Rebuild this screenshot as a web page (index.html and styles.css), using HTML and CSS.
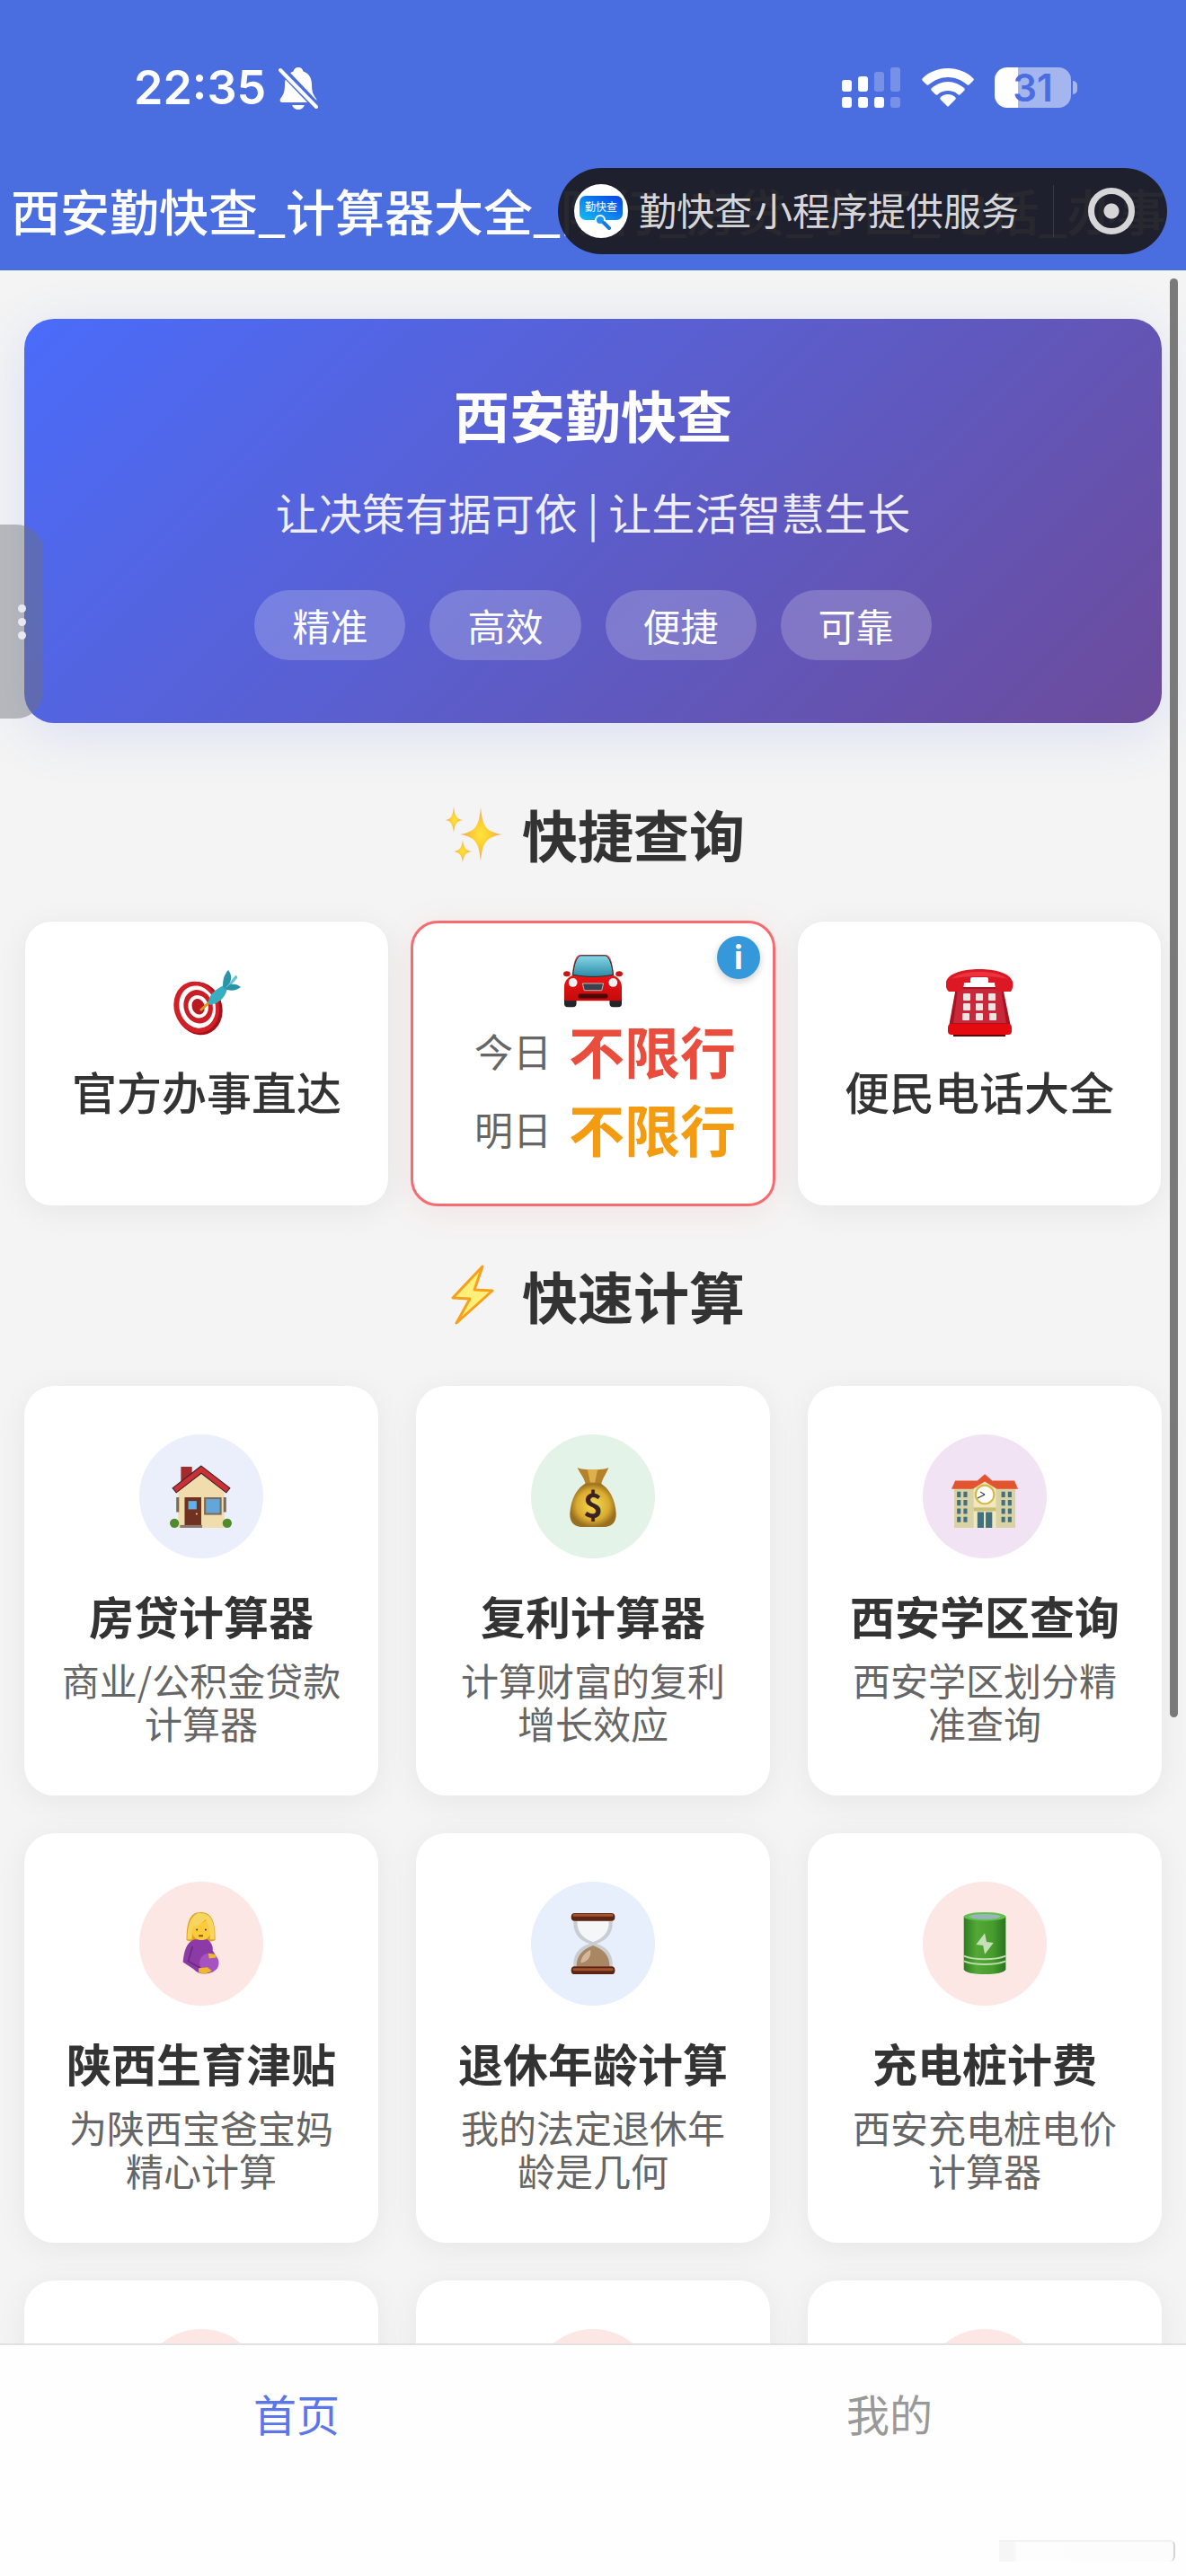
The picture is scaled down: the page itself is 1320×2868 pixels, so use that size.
FILE: index.html
```html
<!DOCTYPE html>
<html lang="zh-CN">
<head>
    <meta charset="UTF-8">
    <meta name="viewport" content="width=device-width, initial-scale=1.0">
    <title>西安勤快查</title>
    <link rel="stylesheet" href="styles.css">
</head>
<body>
    <header class="header">
        <div class="status-bar">
            <div class="status-left">
                <span class="time">22:35</span>
                <svg class="bell" viewBox="0 0 44 48">
                    <path fill="#fff" d="M22 1c3 0 5 2 5.500 4.500C34 8 37 13 37 20c0 9 2 12 5 16 1 2 0 4-2 4H4c-2 0-3-2-2-4 3-4 5-7 5-16 0-7 3-12 9.500-14.500C17 3 19 1 22 1z"/>
                    <path fill="#fff" d="M15 43h14c-1 3-4 5-7 5s-6-2-7-5z"/>
                    <path stroke="#4a6ddf" stroke-width="9" d="M2 2l41 43"/>
                    <path stroke="#fff" stroke-width="4" stroke-linecap="round" d="M2 4l40 41"/>
                </svg>
            </div>
            <div class="status-right">
                <svg class="signal" viewBox="0 0 66 46" fill="#fff">
                    <rect x="0" y="14" width="11" height="13" rx="3"/>
                    <rect x="18" y="10" width="11" height="17" rx="3"/>
                    <rect x="36" y="5" width="11" height="22" rx="3" opacity=".25"/>
                    <rect x="54" y="0" width="11" height="27" rx="3" opacity=".25"/>
                    <rect x="0" y="33" width="11" height="12" rx="3"/>
                    <rect x="18" y="33" width="11" height="12" rx="3"/>
                    <rect x="36" y="33" width="11" height="12" rx="3"/>
                    <rect x="54" y="33" width="11" height="12" rx="3" opacity=".25"/>
                </svg>
                <svg class="wifi" viewBox="0 0 58 43" fill="#fff">
                    <path d="M29 0C18 0 8 4 1 11c-1 1-1 2 0 3l4 4c1 1 2 1 3 0C14 13 21 10 29 10s15 3 21 8c1 1 2 1 3 0l4-4c1-1 1-2 0-3C50 4 40 0 29 0z"/>
                    <path d="M29 15c-7 0-13 3-18 7-1 1-1 2 0 3l4 4c1 1 2 1 3 0 3-3 7-4 11-4s8 1 11 4c1 1 2 1 3 0l4-4c1-1 1-2 0-3-5-4-11-7-18-7z"/>
                    <path d="M29 29c-3 0-6 1-8 3-1 1-1 2 0 3l7 7c1 1 1 1 2 0l7-7c1-1 1-2 0-3-2-2-5-3-8-3z"/>
                </svg>
                <div class="battery">
                    <span class="battery-level">31</span>
                    <span class="battery-cap"></span>
                </div>
            </div>
        </div>
        <div class="nav-bar">
            <h1 class="nav-title">西安勤快查_计算器大全_限行_房贷_学区_电话_办事</h1>
            <div class="capsule">
                <svg class="capsule-logo" viewBox="0 0 60 60">
                    <defs>
                        <linearGradient id="logo" x1="0" x2="1" y1="1" y2="0">
                            <stop offset="0" stop-color="#12c0f2"/>
                            <stop offset="1" stop-color="#0a3fe8"/>
                        </linearGradient>
                    </defs>
                    <circle cx="30" cy="30" r="30" fill="#fff"/>
                    <rect x="6" y="13" width="48" height="27" rx="7" fill="url(#logo)"/>
                    <text x="30" y="30" font-size="12" fill="#fff" text-anchor="middle">勤快查</text>
                    <circle cx="29" cy="40" r="5" fill="#1597f3" stroke="#fff" stroke-width="2"/>
                    <path d="M33 43l6 6" stroke="#1a78d8" stroke-width="4" stroke-linecap="round"/>
                </svg>
                <span class="capsule-text"><span>勤快查</span><span>小程序提供服务</span></span>
                <span class="capsule-line"></span>
                <button class="capsule-close" aria-label="关闭"></button>
            </div>
        </div>
    </header>

    <main class="content">
        <section class="hero">
            <h2 class="hero-title">西安勤快查</h2>
            <p class="hero-subtitle">让决策有据可依 | 让生活智慧生长</p>
            <div class="hero-tags">
                <span class="tag">精准</span>
                <span class="tag">高效</span>
                <span class="tag">便捷</span>
                <span class="tag">可靠</span>
            </div>
        </section>

        <h2 class="section-title">
            <svg viewBox="0 0 68 68">
                <defs>
                    <radialGradient id="spark">
                        <stop offset="0" stop-color="#ffe23e"/>
                        <stop offset=".4" stop-color="#fdd032"/>
                        <stop offset="1" stop-color="#eda25a"/>
                    </radialGradient>
                </defs>
                <path fill="url(#spark)" d="M44 5c2 20 5 27 24 30-19 3-22 10-24 30-2-20-5-27-23-30 18-3 21-10 23-30z"/>
                <path fill="url(#spark)" d="M14 4c1 10 3 14 10 15-7 1-9 5-10 14-1-9-3-13-9-14 6-1 8-5 9-15z"/>
                <path fill="url(#spark)" d="M24 41c1 8 3 12 10 13-7 1-9 5-10 12-1-7-3-11-10-12 7-1 9-5 10-13z"/>
            </svg>
            <span>快捷查询</span>
        </h2>

        <!-- Quick query cards -->
        <div class="quick-grid">
            <a class="quick-card" href="#">
                <svg class="quick-icon" viewBox="0 0 75 75">
                    <g transform="rotate(-18 27 43)">
                        <ellipse cx="28" cy="44" rx="26" ry="30" fill="#a3121a"/>
                        <ellipse cx="26" cy="42" rx="25" ry="29" fill="#d31f26"/>
                        <ellipse cx="27" cy="42" rx="20" ry="24" fill="#fff"/>
                        <ellipse cx="28" cy="42" rx="16" ry="19" fill="#c91e26"/>
                        <ellipse cx="28" cy="42" rx="11" ry="13" fill="#fff"/>
                        <ellipse cx="28" cy="42" rx="7" ry="9" fill="#b81820"/>
                    </g>
                    <path d="M30 46l12-11" stroke="#d79a1e" stroke-width="3"/>
                    <path fill="#37afc0" d="M39 38c0-8 5-14 17-20l4 4C57 33 50 38 41 40z"/>
                    <path fill="#2b93a6" d="M55 19c0-9 2-13 6-18 4 5 4 10 1 16l-5 5z"/>
                    <path fill="#5cc5d1" d="M58 21l11-14c2 0 2 1 2 3L62 20z"/>
                    <path fill="#2b93a6" d="M57 22l6-5c5-1 9 0 12 3-5 4-11 5-18 2z"/>
                </svg>
                <span class="quick-label">官方办事直达</span>
            </a>
            <div class="quick-card limit-card">
                <button class="info-btn" aria-label="说明">i</button>
                <svg class="car-icon" viewBox="0 0 68 68">
                    <defs>
                        <linearGradient id="glass" x2="0" y2="1">
                            <stop offset="0" stop-color="#87d8e8"/>
                            <stop offset="1" stop-color="#2b8ba5"/>
                        </linearGradient>
                        <linearGradient id="red" x2="0" y2="1">
                            <stop offset="0" stop-color="#f0524a"/>
                            <stop offset=".5" stop-color="#e61414"/>
                            <stop offset="1" stop-color="#c60a0a"/>
                        </linearGradient>
                    </defs>
                    <rect x="1" y="48" width="14" height="15" rx="4" fill="#22262b"/>
                    <rect x="53" y="48" width="14" height="15" rx="4" fill="#22262b"/>
                    <ellipse cx="4" cy="25" rx="4" ry="3" fill="#c91616"/>
                    <ellipse cx="64" cy="25" rx="4" ry="3" fill="#c91616"/>
                    <path fill="url(#red)" d="M10 27C12 10 14 3 20 3h28c6 0 8 7 10 24 5 2 9 7 9 13v13c0 2-1 3-3 3H4c-2 0-3-1-3-3V40c0-6 4-11 9-13z"/>
                    <path fill="url(#glass)" stroke="#282828" d="M11 26c1-11 4-21 9-22h28c5 1 8 11 9 22-15 3-31 3-46 0z"/>
                    <circle cx="11" cy="35" r="5" fill="#eaf2f4"/>
                    <circle cx="57" cy="35" r="5" fill="#eaf2f4"/>
                    <path fill="#3b424b" stroke="#b9c0c4" d="M22 36h24l-2 8H24z"/>
                    <rect x="17" y="48" width="34" height="5" rx="2" fill="#4a0808"/>
                </svg>
                <p class="limit-row"><span class="limit-day">今日</span><strong class="limit-today">不限行</strong></p>
                <p class="limit-row"><span class="limit-day">明日</span><strong class="limit-tomorrow">不限行</strong></p>
            </div>
            <a class="quick-card" href="#">
                <svg class="quick-icon" viewBox="0 0 75 75">
                    <path fill="#a8131f" d="M11 20h52l9 44H3z"/>
                    <path fill="#c8283a" d="M13 22h48l6 38H8z"/>
                    <path fill="#db1823" d="M0 14C3 4 20 0 37 0s34 4 37 14c1 4 0 8-2 11H58c-3-3-4-7-4-10H20c0 3-1 7-4 10H3c-3-3-4-7-3-11z"/>
                    <path fill="#ea3540" d="M5 11C15 4 26 3 37 3s22 1 32 8C55 7 19 7 5 11z"/>
                    <rect x="27" y="9" width="20" height="7" rx="2" fill="#fff"/>
                    <rect x="2" y="61" width="71" height="12" rx="4" fill="#e30b10"/>
                    <rect x="8" y="73" width="58" height="2" fill="#5d0709"/>
                    <g fill="#eee4e2">
                        <rect x="19" y="27" width="8" height="8" rx="1"/><rect x="33" y="27" width="8" height="8" rx="1"/><rect x="47" y="27" width="8" height="8" rx="1"/>
                        <rect x="19" y="38" width="8" height="8" rx="1"/><rect x="33" y="38" width="8" height="8" rx="1"/><rect x="47" y="38" width="8" height="8" rx="1"/>
                        <rect x="18" y="49" width="8" height="8" rx="1"/><rect x="33" y="49" width="8" height="8" rx="1"/><rect x="48" y="49" width="8" height="8" rx="1"/>
                    </g>
                </svg>
                <span class="quick-label">便民电话大全</span>
            </a>
        </div>

        <h2 class="section-title">
            <svg viewBox="0 0 68 68">
                <path fill="#fdf07a" stroke="#f9a01b" stroke-width="3" stroke-linejoin="round" d="M46 2L13 37l19 1L17 65l40-36-20-1z"/>
            </svg>
            <span>快速计算</span>
        </h2>

        <!-- Calculator cards -->
        <div class="calc-grid">
            <a class="calc-card" href="#">
                <span class="calc-icon blue">
                    <svg viewBox="0 0 68 68">
                        <path fill="#a52a2e" d="M12 2h12v20l-12 8z"/>
                        <path fill="#f1dcae" d="M34 6l25 22v40H9V28z"/>
                        <path fill="#ca3136" stroke="#3c2326" stroke-width="1" d="M34 1L3 25l4 5L34 9l27 21 4-5z"/>
                        <rect x="16" y="35" width="18" height="32" fill="#6e3122"/>
                        <rect x="20" y="39" width="9" height="9" fill="#62b0e4"/>
                        <circle cx="29" cy="53" r="1" fill="#fd5"/>
                        <rect x="38" y="36" width="17" height="17" fill="#62a6dc" stroke="#7b6a57" stroke-width="2"/>
                        <path fill="#7b6a57" d="M7 35h3v16H7zM58 35h3v16h-3z"/>
                        <circle cx="5" cy="63" r="5" fill="#4f8b2c"/>
                        <circle cx="62" cy="63" r="5" fill="#4f8b2c"/>
                        <rect x="11" y="65" width="24" height="3" fill="#8b7a6c"/>
                    </svg>
                </span>
                <span class="calc-title">房贷计算器</span>
                <span class="calc-desc">商业/公积金贷款计算器</span>
            </a>
            <a class="calc-card" href="#">
                <span class="calc-icon green">
                    <svg viewBox="0 0 68 68">
                        <defs>
                            <radialGradient id="bag">
                                <stop offset="0" stop-color="#f6dc52"/>
                                <stop offset=".7" stop-color="#d9ab30"/>
                                <stop offset="1" stop-color="#9a7020"/>
                            </radialGradient>
                        </defs>
                        <path fill="#b5812a" d="M17 3c6 3 28 3 34 0-3 7-7 12-8 18H26C25 15 20 9 17 3z"/>
                        <path fill="#ddb04b" d="M28 5l3 14h5l3-14z"/>
                        <path fill="url(#bag)" d="M26 20h16c9 5 16 16 17 33 0 9-4 13-11 14H20c-7-1-11-5-11-14 1-17 8-28 17-33z"/>
                        <text x="34" y="57" font-size="36" font-weight="700" fill="#3a2420" text-anchor="middle">$</text>
                    </svg>
                </span>
                <span class="calc-title">复利计算器</span>
                <span class="calc-desc">计算财富的复利增长效应</span>
            </a>
            <a class="calc-card" href="#">
                <span class="calc-icon purple">
                    <svg viewBox="0 0 72 68">
                        <path fill="#d9d2a4" d="M3 22h66v46H3z"/>
                        <path fill="#f0e9bf" d="M24 22l12-7 12 7v46H24z"/>
                        <path fill="#e2542f" d="M4 17h24l8-7 8 7h24l4 9H49l-13-8-13 8H0z"/>
                        <circle cx="36" cy="32" r="10" fill="#fff" stroke="#d8b644" stroke-width="2"/>
                        <path d="M36 32l-8 4M36 32l-5-3" stroke="#333" stroke-width="1"/>
                        <g fill="#42717d">
                            <path d="M6 29h4v6H6zM13 29h4v6h-4zM6 38h4v6H6zM13 38h4v6h-4zM6 47h4v6H6zM13 47h4v6h-4zM6 56h4v6H6zM13 56h4v6h-4z"/>
                            <path d="M54 29h4v6h-4zM61 29h4v6h-4zM54 38h4v6h-4zM61 38h4v6h-4zM54 47h4v6h-4zM61 47h4v6h-4zM54 56h4v6h-4zM61 56h4v6h-4z"/>
                            <path d="M28 51h7v17h-7zM37 51h7v17h-7z"/>
                        </g>
                        <path fill="#c9bd78" d="M24 46h24v4H24z"/>
                    </svg>
                </span>
                <span class="calc-title">西安学区查询</span>
                <span class="calc-desc">西安学区划分精准查询</span>
            </a>
            <a class="calc-card" href="#">
                <span class="calc-icon red">
                    <svg viewBox="0 0 68 72">
                        <path fill="#dfa31c" d="M33 0c13 0 17 10 17 32-5 3-28 3-33 0C17 13 20 0 33 0z"/>
                        <path fill="#8c3ba6" d="M26 31h15c4 3 7 8 6 13 7 9 7 17 1 24-8 4-18 3-23-3L13 57c1-12 4-23 13-26z"/>
                        <path fill="#fbcb3c" d="M23 15c8 0 14-3 19-8 6 13 3 25-8 25-8 0-12-7-11-17z"/>
                        <path fill="#f6d660" d="M30 1C21 5 18 16 18 31h5c1-5 0-10 1-14 6-1 12-5 15-9 3 5 5 10 5 23h5c1-18-3-30-16-30z"/>
                        <circle cx="29" cy="20" r="1" fill="#402018"/>
                        <circle cx="39" cy="20" r="1" fill="#402018"/>
                        <path d="M31 27h5" stroke="#9c4a1c" stroke-width="2"/>
                        <circle cx="43" cy="58" r="11" fill="#a553be"/>
                        <path d="M24 39l-5 17 14 8" stroke="#6f2b88" stroke-width="2" fill="none"/>
                        <path fill="#f0b62d" d="M31 64l10-1 5 4-8 4-7-2zM42 47l8 1 1 4-8 1z"/>
                    </svg>
                </span>
                <span class="calc-title">陕西生育津贴</span>
                <span class="calc-desc">为陕西宝爸宝妈精心计算</span>
            </a>
            <a class="calc-card" href="#">
                <span class="calc-icon sky">
                    <svg viewBox="0 0 68 72">
                        <path fill="#c9cdd1" d="M12 8h44c2 14-5 24-18 28 13 4 20 14 18 28H12c-2-14 5-24 18-28C17 32 10 22 12 8z"/>
                        <path fill="#f5f6f7" d="M16 10h36c1 12-6 20-18 24-12-4-19-12-18-24z"/>
                        <path fill="#a98763" d="M34 38c12 4 19 12 19 24H15c0-12 7-20 19-24z"/>
                        <path fill="#d3b99b" d="M31 43c-7 4-11 9-11 15 8-1 12-7 11-15z"/>
                        <rect x="9" y="1" width="50" height="9" rx="4" fill="#5c2412"/>
                        <rect x="11" y="2" width="46" height="3" rx="1" fill="#a4532f"/>
                        <rect x="9" y="62" width="50" height="9" rx="4" fill="#5c2412"/>
                        <rect x="11" y="64" width="46" height="3" rx="1" fill="#a4532f"/>
                    </svg>
                </span>
                <span class="calc-title">退休年龄计算</span>
                <span class="calc-desc">我的法定退休年龄是几何</span>
            </a>
            <a class="calc-card" href="#">
                <span class="calc-icon red">
                    <svg viewBox="0 0 68 72">
                        <defs>
                            <linearGradient id="cell">
                                <stop offset="0" stop-color="#2c7d1e"/>
                                <stop offset=".3" stop-color="#54a837"/>
                                <stop offset=".7" stop-color="#469c2c"/>
                                <stop offset="1" stop-color="#2a7420"/>
                            </linearGradient>
                        </defs>
                        <path fill="url(#cell)" d="M10 5h48v60c0 8-48 8-48 0z"/>
                        <ellipse cx="34" cy="5" rx="24" ry="5" fill="#61c24b"/>
                        <ellipse cx="34" cy="5" rx="18" ry="3" fill="#9ab5b8"/>
                        <path fill="#c5dfb8" d="M34 24L24 37l8 1 2 10 10-13-8-1z"/>
                        <path d="M10 50c12 5 36 5 48 0M10 56c12 5 36 5 48 0" fill="none" stroke="#bcdcae" stroke-width="2"/>
                    </svg>
                </span>
                <span class="calc-title">充电桩计费</span>
                <span class="calc-desc">西安充电桩电价计算器</span>
            </a>
            <a class="calc-card" href="#"><span class="calc-icon red"></span></a>
            <a class="calc-card" href="#"><span class="calc-icon red"></span></a>
            <a class="calc-card" href="#"><span class="calc-icon red"></span></a>
        </div>

        <button class="side-handle" aria-label="展开"><i></i><i></i><i></i></button>
        <span class="scroll-thumb"></span>
    </main>

    <nav class="tab-bar">
        <a class="tab active" href="#">首页</a>
        <a class="tab" href="#">我的</a>
        <span class="corner-mark"></span>
    </nav>
</body>
</html>
```

FILE: styles.css
```css
* {
    box-sizing: border-box;
    margin: 0;
    padding: 0;
}

body {
    display: flex;
    flex-direction: column;
    height: 100vh;
    font-family: "Noto Sans CJK SC", sans-serif;
    background-color: #f4f4f4;
    color: #333;
}

a {
    color: inherit;
    text-decoration: none;
}

button {
    border: none;
    font-family: inherit;
    cursor: pointer;
}

/* Header */
.header {
    flex: none;
    background-color: #4a6ddf;
    color: #fff;
}

.status-bar {
    display: flex;
    justify-content: space-between;
    align-items: center;
    height: 187px;
    padding: 8px 121px 0 149px;
}

.status-left,
.status-right {
    display: flex;
    align-items: center;
}

.status-left {
    gap: 14px;
}

.status-right {
    gap: 23px;
}

.time {
    font-family: Inter, sans-serif;
    font-size: 52px;
    font-weight: 600;
    line-height: 60px;
}

.bell {
    width: 44px;
    height: 48px;
}

.signal {
    width: 66px;
    height: 46px;
}

.wifi {
    width: 58px;
    height: 43px;
}

.battery {
    display: flex;
    align-items: center;
    gap: 2px;
}

.battery-level {
    width: 85px;
    height: 45px;
    border-radius: 14px;
    background: linear-gradient(90deg, #fff 26px, rgba(255, 255, 255, 0.5) 26px);
    color: #4a6ddf;
    font-family: Inter, sans-serif;
    font-size: 42px;
    font-weight: 600;
    line-height: 45px;
    text-align: center;
}

.battery-cap {
    width: 5px;
    height: 15px;
    border-radius: 0 5px 5px 0;
    background-color: rgba(255, 255, 255, 0.5);
}

.nav-bar {
    position: relative;
    height: 114px;
    padding-left: 12px;
    overflow: hidden;
}

.nav-title {
    font-size: 55px;
    font-weight: 500;
    line-height: 92px;
    white-space: nowrap;
}

.capsule {
    position: absolute;
    top: 0;
    right: 21px;
    display: flex;
    align-items: center;
    width: 678px;
    height: 96px;
    padding: 0 36px 0 18px;
    border-radius: 48px;
    background-color: rgba(28, 28, 36, 0.95);
    color: #d6d6d8;
}

.capsule-logo {
    width: 60px;
    height: 60px;
}

.capsule-text {
    display: flex;
    gap: 3px;
    margin-left: 12px;
    padding-bottom: 6px;
    font-size: 42px;
    white-space: nowrap;
}

.capsule-line {
    width: 1px;
    height: 58px;
    margin-left: auto;
    background-color: #3a3a42;
}

.capsule-close {
    width: 52px;
    height: 52px;
    margin-left: 38px;
    border: 7px solid #d6d6d8;
    border-radius: 50%;
    background: radial-gradient(circle, #d6d6d8 8px, transparent 9px);
}

/* Scrolling content */
.content {
    position: relative;
    flex: 1;
    min-height: 0;
    padding: 54px 27px 0;
    overflow: hidden;
}

.hero {
    display: flex;
    flex-direction: column;
    align-items: center;
    margin-bottom: 81px;
    padding: 67px 0 70px;
    border-radius: 33px;
    background: linear-gradient(135deg, #4a6cfa 0%, #5a5fd0 45%, #6c4b9b 100%);
    box-shadow: 0 12px 60px rgba(74, 108, 247, 0.15);
    color: #fff;
}

.hero-title {
    font-size: 62px;
    font-weight: 700;
    line-height: 78px;
}

.hero-subtitle {
    margin: 36px 0 55px;
    font-size: 48px;
    line-height: 66px;
    opacity: 0.9;
}

.hero-tags {
    display: flex;
    gap: 27px;
}

.tag {
    padding: 0 42px;
    border-radius: 39px;
    background-color: rgba(255, 255, 255, 0.2);
    font-size: 42px;
    line-height: 78px;
}

.section-title {
    display: flex;
    justify-content: center;
    align-items: center;
    gap: 22px;
    margin-bottom: 55px;
    font-size: 62px;
    font-weight: 700;
    line-height: 84px;
}

.section-title svg {
    width: 68px;
    height: 68px;
}

/* Quick cards */
.quick-grid {
    display: grid;
    grid-template-columns: repeat(3, 1fr);
    gap: 24px;
    margin-bottom: 57px;
}

.quick-card {
    position: relative;
    display: flex;
    flex-direction: column;
    align-items: center;
    padding-top: 53px;
    border: 1px solid #ececec;
    border-radius: 30px;
    background-color: #fff;
    box-shadow: 0 6px 36px rgba(0, 0, 0, 0.06);
}

.quick-icon {
    width: 75px;
    height: 75px;
}

.quick-label {
    margin-top: 27px;
    font-size: 50px;
    font-weight: 500;
    line-height: 66px;
}

.limit-card {
    padding: 32px 0 40px;
    border: 3px solid #f56c70;
    box-shadow: 0 6px 36px rgba(245, 108, 112, 0.12);
}

.car-icon {
    width: 66px;
    height: 66px;
}

.limit-row {
    display: flex;
    align-items: center;
    gap: 19px;
    padding-left: 27px;
    line-height: 87px;
}

.limit-day {
    color: #666;
    font-size: 43px;
}

.limit-today,
.limit-tomorrow {
    font-size: 62px;
    font-weight: 700;
}

.limit-today {
    color: #e94d3d;
}

.limit-tomorrow {
    color: #f39c12;
}

.info-btn {
    position: absolute;
    top: 14px;
    right: 14px;
    width: 48px;
    height: 48px;
    border-radius: 50%;
    background-color: #3498db;
    box-shadow: 0 3px 9px rgba(0, 0, 0, 0.2);
    color: #fff;
    font-family: Inter, sans-serif;
    font-size: 36px;
    font-weight: 700;
    line-height: 48px;
}

/* Calculator cards */
.calc-grid {
    display: grid;
    grid-template-columns: repeat(3, 1fr);
    gap: 42px;
    padding-top: 4px;
}

.calc-card {
    display: flex;
    flex-direction: column;
    align-items: center;
    padding: 54px 36px;
    border-radius: 33px;
    background-color: #fff;
    box-shadow: 0 6px 36px rgba(0, 0, 0, 0.06);
}

.calc-icon {
    display: flex;
    justify-content: center;
    align-items: center;
    width: 138px;
    height: 138px;
    border-radius: 50%;
}

.calc-icon svg {
    height: 70px;
}

.blue {
    background-color: #ebeffc;
}

.green {
    background-color: #e3f3e8;
}

.purple {
    background-color: #f1e3f4;
}

.red {
    background-color: #fce7e5;
}

.sky {
    background-color: #e7eefc;
}

.calc-title {
    margin-top: 30px;
    font-size: 50px;
    font-weight: 700;
    line-height: 66px;
}

.calc-desc {
    margin: 15px 0 3px;
    color: #666;
    font-size: 42px;
    line-height: 48px;
    text-align: center;
}

/* Overlays */
.side-handle {
    position: absolute;
    top: 283px;
    left: 0;
    display: flex;
    flex-direction: column;
    justify-content: center;
    align-items: center;
    gap: 6px;
    width: 48px;
    height: 216px;
    border-radius: 0 30px 30px 0;
    background-color: rgba(110, 112, 120, 0.45);
}

.side-handle i {
    width: 9px;
    height: 9px;
    border-radius: 50%;
    background-color: #e6e8f2;
}

.scroll-thumb {
    position: absolute;
    top: 9px;
    right: 9px;
    width: 9px;
    height: 1602px;
    border-radius: 5px;
    background-color: #7a7a7a;
}

/* Tab bar */
.tab-bar {
    position: relative;
    flex: none;
    display: flex;
    height: 259px;
    border-top: 2px solid #e2e2e4;
    background-color: #fefefe;
}

.tab {
    flex: 1;
    color: #999;
    font-size: 48px;
    line-height: 150px;
    text-align: center;
}

.tab.active {
    color: #5b76e8;
}

.corner-mark {
    position: absolute;
    right: 12px;
    bottom: 16px;
    width: 196px;
    height: 24px;
    border-top: 2px solid #f2f2f2;
    border-right: 2px solid #d4d4d4;
    border-radius: 0 6px 6px 0;
    background: linear-gradient(90deg, #f6f6f6 16px, #fdfdfd 20px, #fcfcfc);
}
```
